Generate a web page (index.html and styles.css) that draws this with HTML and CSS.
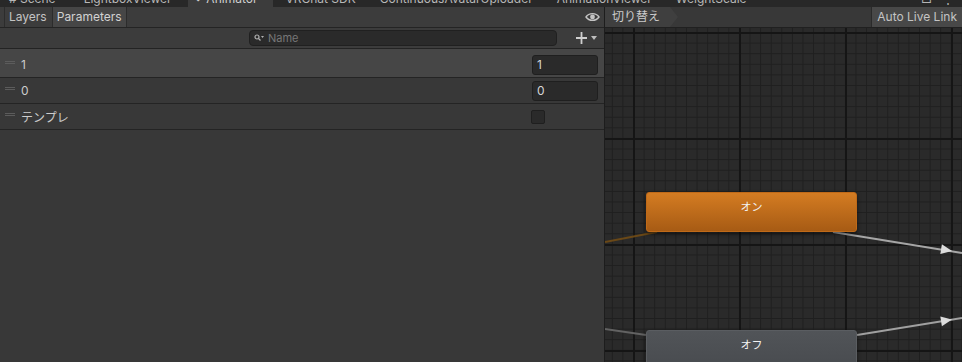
FILE: index.html
```html
<!DOCTYPE html>
<html lang="ja">
    <head>
        <meta charset="UTF-8" />
        <title>Animator</title>
        <link rel="stylesheet" href="styles.css">
    </head>
    <body>
        <div class="tabs">
            <div class="tab first"><span># Scene</span></div>
            <div class="tab"><span>LightboxViewer</span></div>
            <div class="tab active"><span>&#x2B29;&nbsp; Animator</span></div>
            <div class="tab"><span>VRChat SDK</span></div>
            <div class="tab"><span>ContinuousAvatarUploader</span></div>
            <div class="tab"><span>AnimationViewer</span></div>
            <div class="tab"><span>WeightScale</span></div>
            <div class="tabicons"><span>&#x25A1;</span><span>&#x22EE;</span></div>
        </div>

        <div class="main">
            <div class="left">
                <div class="toolbar">
                    <div class="tbtn">Layers</div>
                    <div class="tbtn on">Parameters</div>
                    <div class="eye">
                        <svg width="15" height="10" viewBox="0 0 15 10">
                            <path d="M1 5 C4 0.5 11 0.5 14 5 C11 9.5 4 9.5 1 5 Z" fill="none" stroke="#c4c4c4" stroke-width="1.4"/>
                            <circle cx="7.5" cy="5" r="2.4" fill="#c4c4c4"/>
                        </svg>
                    </div>
                </div>

                <div class="searchrow">
                    <div class="search">
                        <svg width="10" height="8" viewBox="0 0 10 8">
                            <circle cx="3" cy="3" r="2" fill="none" stroke="#b0b0b0" stroke-width="1.2"/>
                            <path d="M4.5 4.5 L6.5 6.5" stroke="#b0b0b0" stroke-width="1.2"/>
                            <path d="M7 2 L10 2 L8.5 4 Z" fill="#b0b0b0"/>
                        </svg>
                        <span>Name</span>
                    </div>
                    <div class="add">
                        <svg width="22" height="12" viewBox="0 0 22 12">
                            <path d="M5.5 0 V12 M0 6 H11" stroke="#cfcfcf" stroke-width="1.8"/>
                            <path d="M15 4 H21 L18 8 Z" fill="#bdbdbd"/>
                        </svg>
                    </div>
                </div>

                <div class="row first sel">
                    <div class="handle"></div>
                    <div class="pname">1</div>
                    <div class="field">1</div>
                </div>
                <div class="row">
                    <div class="handle"></div>
                    <div class="pname">0</div>
                    <div class="field">0</div>
                </div>
                <div class="row">
                    <div class="handle"></div>
                    <div class="pname">テンプレ</div>
                    <div class="check"></div>
                </div>
            </div>

            <div class="right">
                <div class="gtoolbar">
                    <div class="crumb">切り替え</div>
                    <div class="live">Auto Live Link</div>
                </div>
                <div class="canvas">
                    <svg class="edges" width="357" height="334" viewBox="0 0 357 334">
                        <line x1="0" y1="214" x2="52" y2="204" stroke="#6a4817" stroke-width="2"/>
                        <line x1="228" y1="204" x2="357" y2="225" stroke="#a6a6a6" stroke-width="2"/>
                        <polygon points="347,223 335.3,226.1 336.9,216.3" fill="#dcdcdc"/>
                        <line x1="0" y1="301" x2="41" y2="307" stroke="#626262" stroke-width="2"/>
                        <line x1="252" y1="307" x2="357" y2="290" stroke="#a0a0a0" stroke-width="2"/>
                        <polygon points="347,291.6 336.9,298.3 335.3,288.5" fill="#dcdcdc"/>
                    </svg>
                    <div class="node orange">オン</div>
                    <div class="node gray">オフ</div>
                </div>
            </div>
        </div>
    </body>
</html>
```

FILE: styles.css
```css
body
{
    margin: 0;
    width: 962px;
    height: 362px;
    overflow: hidden;
    background-color: #383838;
    color: #c8c8c8;
    font-family: Inter, "Noto Sans CJK JP", sans-serif;
    font-size: 12px;
}

/* window tabs, mostly cut off at the top */
.tabs
{
    height: 7px;
    display: flex;
    overflow: hidden;
    background-color: #282828;
}

.tab
{
    padding: 0 12px;
    color: #b8b8b8;
    white-space: nowrap;
}

.tab.first
{
    padding-left: 9px;
    padding-right: 16px;
}

.tab span
{
    display: block;
    margin-top: -9px;
    line-height: 15px;
}

.tab.active
{
    background-color: #3c3c3c;
    color: #d0d0d0;
    margin-left: 4px;
    padding: 0 16px 0 8px;
}

.tabicons
{
    margin-left: auto;
    display: flex;
    gap: 10px;
    padding-right: 8px;
    color: #b4b4b4;
}

.tabicons span
{
    display: block;
    margin-top: -9px;
    line-height: 15px;
}

.main
{
    display: flex;
    height: 355px;
}

.left
{
    width: 604px;
    border-right: 1px solid #1d1d1d;
    background-color: #383838;
}

.toolbar
{
    height: 20px;
    display: flex;
    align-items: stretch;
    padding-left: 4px;
    background-color: #3c3c3c;
    border-bottom: 1px solid #242424;
}

.tbtn
{
    padding: 0 5px 0 4px;
    line-height: 20px;
    border-left: 1px solid #2c2c2c;
    color: #c4c4c4;
}

.tbtn.on
{
    padding: 0 4px;
    background-color: #464646;
    border-right: 1px solid #2c2c2c;
    color: #d2d2d2;
}

.eye
{
    margin-left: auto;
    padding-right: 4px;
    display: flex;
    align-items: center;
}

.searchrow
{
    height: 20px;
    display: flex;
    align-items: center;
    background-color: #3c3c3c;
    border-bottom: 1px solid #232323;
}

.search
{
    margin-left: 249px;
    width: 302px;
    height: 14px;
    display: flex;
    align-items: center;
    gap: 4px;
    padding-left: 4px;
    background-color: #2a2a2a;
    border: 1px solid #202020;
    border-radius: 4px;
    color: #777777;
    font-size: 11px;
}

.add
{
    margin-left: 19px;
    display: flex;
    align-items: center;
}

.row
{
    height: 25px;
    display: flex;
    align-items: center;
    border-bottom: 1px solid #242424;
}

.row.first
{
    height: 25px;
    padding-top: 3px;
}

.row.sel
{
    background-color: #464646;
}

.handle
{
    width: 10px;
    height: 1px;
    margin: 0 6px 4px 5px;
    border-top: 1px solid #5c5c5c;
    border-bottom: 1px solid #5c5c5c;
}

.pname
{
    flex: 1;
    color: #cccccc;
}

.field
{
    width: 60px;
    height: 18px;
    margin-right: 6px;
    padding-left: 4px;
    line-height: 18px;
    background-color: #2a2a2a;
    border: 1px solid #1f1f1f;
    border-radius: 3px;
    color: #d6d6d6;
}

.check
{
    width: 12px;
    height: 12px;
    margin-right: 59px;
    background-color: #2a2a2a;
    border: 1px solid #1f1f1f;
    border-radius: 2px;
}

.right
{
    flex: 1;
    display: flex;
    flex-direction: column;
}

.gtoolbar
{
    height: 20px;
    display: flex;
    justify-content: space-between;
    background-color: #383838;
    border-bottom: 1px solid #202020;
}

.crumb
{
    padding: 0 18px 0 7px;
    line-height: 20px;
    background-color: #3f3f3f;
    clip-path: polygon(0 0, calc(100% - 8px) 0, 100% 50%, calc(100% - 8px) 100%, 0 100%);
    color: #cccccc;
}

.live
{
    padding: 0 5px 0 5px;
    line-height: 20px;
    background-color: #484848;
    border-left: 1px solid #2a2a2a;
    color: #c4c4c4;
}

/* graph area */
.canvas
{
    flex: 1;
    position: relative;
    overflow: hidden;
    background-color: #2a2a2a;
    background-image:
        linear-gradient(90deg, #151515 2px, transparent 2px),
        linear-gradient(#151515 2px, transparent 2px),
        linear-gradient(90deg, #1f1f1f 1px, transparent 1px),
        linear-gradient(#1f1f1f 1px, transparent 1px);
    background-size: 106px 106px, 106px 106px, 10.6px 10.6px, 10.6px 10.6px;
    background-position: 28px 4px, 28px 4px, 28px 4px, 28px 4px;
}

.edges
{
    position: absolute;
    left: 0;
    top: 0;
}

.node
{
    position: absolute;
    left: 41px;
    width: 211px;
    height: 40px;
    box-sizing: border-box;
    padding-top: 5px;
    text-align: center;
    border-radius: 3px;
    box-shadow: 0 2px 4px rgba(0, 0, 0, 0.5);
    font-size: 11px;
    color: #f2f2f2;
}

.orange
{
    top: 164px;
    background: linear-gradient(#d47c22, #a75b14);
    border: 1px solid #c06a18;
}

.gray
{
    top: 302px;
    background: linear-gradient(#515458, #484b4f);
    border: 1px solid #5a5d61;
}
```
